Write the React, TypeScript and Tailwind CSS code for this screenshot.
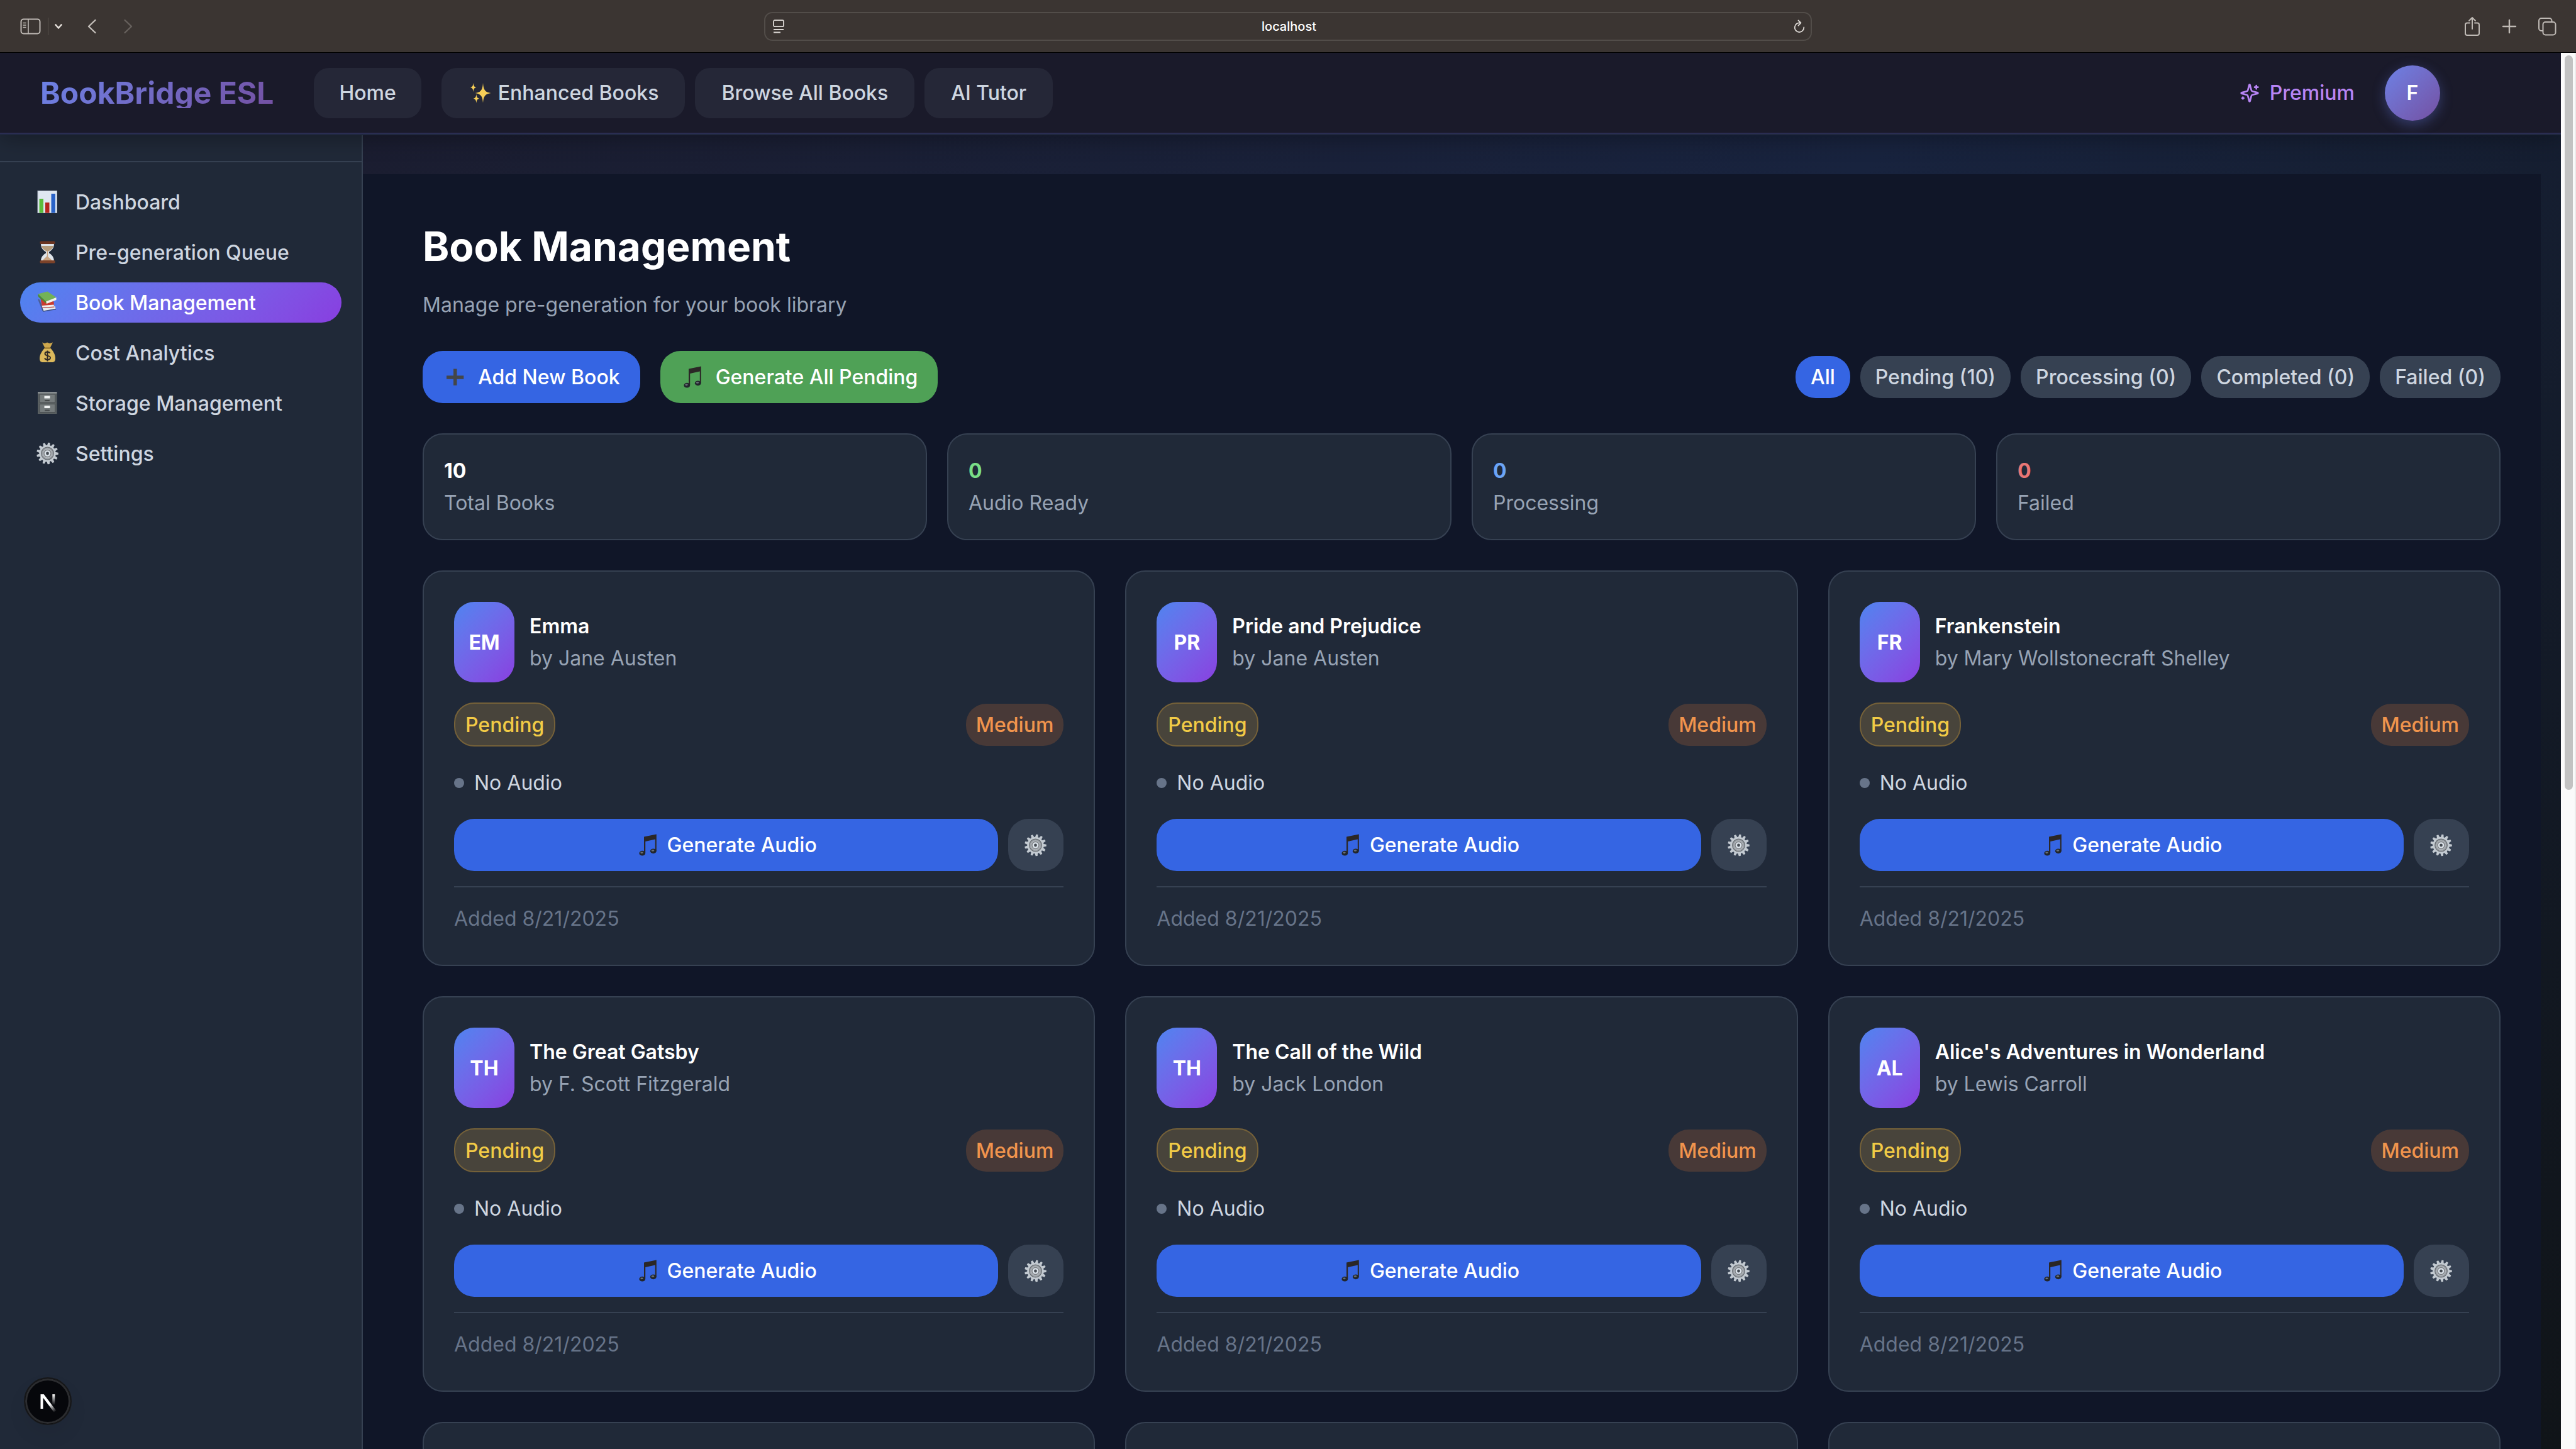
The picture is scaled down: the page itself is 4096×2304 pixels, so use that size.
import React from 'react';

type IconProps = { className?: string };

const Emoji = ({ children }: { children: React.ReactNode }) => (
  <svg viewBox="0 0 40 40" className="size-10 shrink-0" aria-hidden="true">
    {children}
  </svg>
);

const ChartEmoji = () => (
  <Emoji>
    <rect x="4" y="2.5" width="30.5" height="35" fill="#dfe7f1" stroke="#aeb7c4" strokeWidth="1" />
    <rect x="6.5" y="15" width="6.5" height="22.5" fill="#5bbd3c" />
    <rect x="16" y="21" width="6.5" height="16.5" fill="#b5261e" />
    <rect x="25.5" y="7" width="6.5" height="30.5" fill="#2a63c8" />
  </Emoji>
);

const HourglassEmoji = () => (
  <Emoji>
    <path d="M9 6h21c0 6-2 10-8 13.500v2c6 3.500 8 8 8 13.500H9c0-6 2-10 8-13.500v-2C11 16 9 12 9 6z" fill="#dfe4ea" />
    <path d="M10 10h19c-1 4-4 6.500-8 8.500h-3c-4-2-7-4.500-8-8.500z" fill="#b59a7a" />
    <path d="M11.500 34.500c1-4 5-5 7.500-9 2.500 4 7 5 8.500 9z" fill="#c9a583" />
    <path d="M19.500 18v9" stroke="#c9a583" strokeWidth="1.500" />
    <rect x="7.500" y="2.500" width="24" height="4.500" rx="1.500" fill="#6b3420" />
    <rect x="7.500" y="33" width="24" height="4.500" rx="1.500" fill="#7c4229" />
  </Emoji>
);

const BooksEmoji = () => (
  <Emoji>
    <path d="M4 14.500l3 1 6 15.500-1.500 2.500z" fill="#4a5f96" />
    <path d="M11.500 28l20-2.500 1 4.500-20 4z" fill="#e9ebef" />
    <path d="M11 29.500l2 4.500 20-3.500" fill="none" stroke="#3c4f82" strokeWidth="1.500" />
    <path d="M8.500 13.500l21 5 .5 5.500-19.500 1.500z" fill="#c93b30" />
    <path d="M10.500 25l19-1.500.5 2.800-18.500 1.700z" fill="#f1eded" />
    <path d="M11 28.500l19.500-1.500" stroke="#a92a20" strokeWidth="1.200" />
    <path d="M4.500 6.500L19.500 2.500 33.500 12 17 18.500z" fill="#73b257" />
    <path d="M17 18.500l16.500-6.500v4L18 22z" fill="#f2f4ee" />
    <path d="M4.500 6.500c-.5 2 0 4 1.500 5.500l12 10-1-3.500z" fill="#4d8c33" />
  </Emoji>
);

const MoneyEmoji = () => (
  <Emoji>
    <path d="M11 3.500l4 1.500 4-1.500 4 1.500 5-1.500-5 10h-7z" fill="#cfa84d" />
    <path d="M15.500 12h8c5 4.500 8.500 11 8.500 16.500 0 4.500-1.500 6.500-5.500 6.500h-14c-4 0-5.500-2-5.500-6.500C7 23 11 16.500 15.500 12z" fill="#dcb95c" />
    <path d="M14.500 12.500h10" stroke="#93702a" strokeWidth="2" />
    <path d="M23.500 20.500c-1-1.500-2.500-2-4-2-2.500 0-4 1.200-4 3 0 4.200 8.500 2 8.500 6.300 0 2-1.800 3.200-4.500 3.200-2 0-3.700-.8-4.500-2.500M19.500 16.500v17" fill="none" stroke="#2f2a26" strokeWidth="2" />
  </Emoji>
);

const CabinetEmoji = () => (
  <Emoji>
    <rect x="4" y="2.500" width="30.500" height="34.500" fill="#595f61" />
    <rect x="4" y="2.500" width="30.500" height="2" fill="#9a9fa1" />
    <rect x="7" y="6" width="24.500" height="13" fill="#757b7c" stroke="#4a4f50" />
    <rect x="7" y="21.500" width="24.500" height="13" fill="#757b7c" stroke="#4a4f50" />
    <rect x="14.500" y="8.500" width="9" height="4" fill="#f0f2f2" />
    <rect x="14.500" y="24" width="9" height="4" fill="#f0f2f2" />
    <rect x="15" y="15" width="8" height="2" rx="1" fill="#45494a" />
    <rect x="15" y="30.500" width="8" height="2" rx="1" fill="#45494a" />
  </Emoji>
);

const teeth = Array.from({ length: 13 }, (_, i) => (i * 360) / 13 + 8);

const GearEmoji = () => (
  <Emoji>
    {teeth.map((angle) => (
      <path key={angle} d="M17 8l1-5.300h3L22 8z" fill="#c3cad1" transform={`rotate(${angle} 19.500 20)`} />
    ))}
    <circle cx="19.500" cy="20" r="13.200" fill="#c3cad1" />
    <circle cx="19.500" cy="20" r="9.800" fill="#9ba0a6" stroke="#6b7075" strokeWidth="1.300" />
    <circle cx="19.500" cy="20" r="6.800" fill="#7d8185" stroke="#b4b9be" strokeWidth="1.200" />
    <circle cx="19.500" cy="20" r="3.600" fill="#454b52" stroke="#dce3ea" strokeWidth="2.400" />
  </Emoji>
);

const PlusEmoji = () => (
  <Emoji>
    <path d="M17 6.500h5.500v10.700h10.800v5.500H22.500v10H17v-10H6v-5.500h11z" fill="#444648" />
  </Emoji>
);

const NoteEmoji = () => (
  <Emoji>
    <path d="M13 6.600L32.800 2.400V29h-2V10.600l-15.600 3.300V32h-2.200z" fill="#2b2726" />
    <ellipse cx="10.300" cy="32.700" rx="4.900" ry="3.900" fill="#22262b" />
    <ellipse cx="27.800" cy="29.300" rx="4.900" ry="3.900" fill="#22262b" />
    <ellipse cx="9.500" cy="31.800" rx="2.200" ry="1.400" fill="#687078" />
    <ellipse cx="27" cy="28.400" rx="2.200" ry="1.400" fill="#687078" />
  </Emoji>
);

const SparklesEmoji = () => (
  <Emoji>
    <g fill="#f8cf57">
      <path d="M24 4c.9 11 3 14.500 12.500 16C27 21.500 24.900 25 24 35.500 23.100 25 21 21.500 11.500 20 21 18.500 23.100 15 24 4z" />
      <path d="M8.600 3.800c.5 5 1.500 6.500 5 7.200-3.500.7-4.500 2.200-5 7.200-.5-5-1.500-6.500-5-7.200 3.500-.7 4.500-2.200 5-7.200z" />
      <path d="M13.400 21.500c.5 5 1.500 6.500 5 7.200-3.500.7-4.500 2.200-5 7.200-.5-5-1.500-6.500-5-7.200 3.500-.7 4.500-2.200 5-7.200z" />
    </g>
  </Emoji>
);

const PremiumIcon = ({ className }: IconProps) => (
  <svg viewBox="0 0 24 24" fill="none" stroke="currentColor" strokeWidth="2" strokeLinecap="round" strokeLinejoin="round" className={className} aria-hidden="true">
    <path d="M9.937 15.5A2 2 0 0 0 8.500 14.063l-6.135-1.582a.5.5 0 0 1 0-.962L8.500 9.936A2 2 0 0 0 9.937 8.500l1.582-6.135a.5.5 0 0 1 .963 0L14.063 8.500A2 2 0 0 0 15.500 9.937l6.135 1.581a.5.5 0 0 1 0 .964L15.500 14.063a2 2 0 0 0-1.437 1.437l-1.582 6.135a.5.5 0 0 1-.963 0z" />
    <path d="M20 3v4M22 5h-4M4 17v2M5 18H3" />
  </svg>
);

const iconButton = 'flex items-center justify-center text-[#bfbab5]';

function BrowserBar() {
  return (
    <div className="grid h-[83px] shrink-0 grid-cols-[1fr_1666px_1fr] items-center border-b border-black bg-[#3b3532] box-content">
      <div className="flex items-center pl-8">
        <button aria-label="Sidebar" className={iconButton}>
          <svg viewBox="0 0 33 26" className="h-[26px] w-[33px]" fill="none" stroke="currentColor" strokeWidth="2">
            <rect x="1.500" y="1.500" width="30" height="23" rx="4" />
            <path d="M13 1.500v23M4.500 7.500h5M4.500 11h5M4.500 14.500h5" strokeWidth="1.600" />
          </svg>
        </button>
        <span className="ml-[11px] h-7 w-px bg-[#57514d]" />
        <button aria-label="Tab groups" className="ml-[9px] text-[#e4dfda]">
          <svg viewBox="0 0 14 10" className="h-[10px] w-[14px]" fill="none" stroke="currentColor" strokeWidth="2.600" strokeLinecap="round" strokeLinejoin="round">
            <path d="M2.500 2.500L7 7.500l4.500-5" />
          </svg>
        </button>
        <button aria-label="Back" className="ml-[38px] text-[#c4bfba]">
          <svg viewBox="0 0 16 26" className="h-[26px] w-4" fill="none" stroke="currentColor" strokeWidth="2.400" strokeLinecap="round" strokeLinejoin="round">
            <path d="M13.500 3L3 13l10.500 10" />
          </svg>
        </button>
        <button aria-label="Forward" className="ml-[42px] text-[#67615d]">
          <svg viewBox="0 0 16 26" className="h-[26px] w-4" fill="none" stroke="currentColor" strokeWidth="2.400" strokeLinecap="round" strokeLinejoin="round">
            <path d="M2.500 3L13 13 2.500 23" />
          </svg>
        </button>
      </div>
      <div className="flex h-[46px] items-center justify-between rounded-[13px] border-2 border-[#524d49] pr-[9px] pl-3 text-[#dcd8d4]">
        <button aria-label="Reader">
          <svg viewBox="0 0 18 22" className="h-[22px] w-[18px]" fill="none" stroke="currentColor" strokeWidth="1.800">
            <rect x="1" y="1.200" width="16" height="10" rx="2" />
            <path d="M1 16h16M1 20.500h11" />
          </svg>
        </button>
        <span className="text-[20px] leading-6 font-medium text-white">localhost</span>
        <button aria-label="Reload">
          <svg viewBox="0 0 18 22" className="h-[22px] w-[18px]" fill="none" stroke="currentColor" strokeWidth="1.800" strokeLinecap="round" strokeLinejoin="round">
            <path d="M10.500 5.600A7.300 7.300 0 1 0 16.300 12.500M7.500 1.500l4 4-4 4.200" />
          </svg>
        </button>
      </div>
      <div className="flex items-center justify-end pr-[31px]">
        <button aria-label="Share" className={iconButton}>
          <svg viewBox="0 0 26 32" className="h-8 w-[26px]" fill="none" stroke="currentColor" strokeWidth="2" strokeLinecap="round" strokeLinejoin="round">
            <path d="M9 10.500H5a3 3 0 0 0-3 3V27a3 3 0 0 0 3 3h16a3 3 0 0 0 3-3V13.500a3 3 0 0 0-3-3h-4M13 20V2M8 7l5-5 5 5" />
          </svg>
        </button>
        <button aria-label="New tab" className="ml-[34px] text-[#bfbab5]">
          <svg viewBox="0 0 24 24" className="size-6" fill="none" stroke="currentColor" strokeWidth="2.400" strokeLinecap="round">
            <path d="M12 2v20M2 12h20" />
          </svg>
        </button>
        <button aria-label="Tab overview" className="ml-[33px] text-[#bfbab5]">
          <svg viewBox="0 0 30 30" className="size-[30px]" fill="none" stroke="currentColor" strokeWidth="2" strokeLinejoin="round">
            <rect x="8.500" y="8" width="20" height="20.500" rx="4" />
            <path d="M8.500 22H6a4 4 0 0 1-4-4V6a4 4 0 0 1 4-4h12.500a4 4 0 0 1 4 4v2" />
          </svg>
        </button>
      </div>
    </div>
  );
}

const navLink = 'flex h-20 items-center gap-2 rounded-3xl bg-[#252737] font-medium text-[#ced6e0]';

function Header() {
  return (
    <header className="relative z-10 shadow-[0_6px_32px_rgba(0,0,0,0.3)]">
      <div className="flex h-[129px] items-center justify-between border-b-2 border-[#2a2d52] bg-[#1a1a2a] pr-[192px] pl-16">
        <div className="flex items-center">
          <a href="#home" className="bg-linear-135 from-[#6c82e6] to-[#7350a2] bg-clip-text text-5xl leading-none font-bold text-transparent">
            BookBridge ESL
          </a>
          <nav className="ml-16 flex items-center gap-4">
            <a href="#home" className={`${navLink} px-10`}>Home</a>
            <a href="#enhanced" className={`${navLink} ml-4 px-[42px]`}>
              <SparklesEmoji />
              Enhanced Books
            </a>
            <a href="#browse" className={`${navLink} px-[42px]`}>Browse All Books</a>
            <a href="#tutor" className={`${navLink} px-[42px]`}>AI Tutor</a>
          </nav>
        </div>
        <div className="flex items-center gap-12">
          <a href="#premium" className="flex items-center gap-4 font-medium text-[#b885f5]">
            <PremiumIcon className="size-8" />
            Premium
          </a>
          <button className="size-[88px] rounded-full bg-linear-135 from-[#6c82e6] to-[#7350a2] font-semibold text-white shadow-[0_6px_20px_rgba(102,126,234,0.35)]">
            F
          </button>
        </div>
      </div>
      <div className="h-[2px] bg-[#20283f]" />
    </header>
  );
}

const menu = [
  { label: 'Dashboard', Icon: ChartEmoji, active: false },
  { label: 'Pre-generation Queue', Icon: HourglassEmoji, active: false },
  { label: 'Book Management', Icon: BooksEmoji, active: true },
  { label: 'Cost Analytics', Icon: MoneyEmoji, active: false },
  { label: 'Storage Management', Icon: CabinetEmoji, active: false },
  { label: 'Settings', Icon: GearEmoji, active: false },
];

function Sidebar() {
  return (
    <aside className="w-[577px] shrink-0 border-r-2 border-[#364152] bg-[#202938]">
      <div className="h-[43px] border-b-2 border-[#364152]" />
      <nav className="flex flex-col gap-4 px-8 pt-[31px]">
        {menu.map(({ label, Icon, active }) => (
          <a
            key={label}
            href="#section"
            className={`flex h-16 items-center gap-6 rounded-full px-6 font-medium ${
              active ? 'bg-linear-135 from-[#4c84f0] to-[#883ee0] text-white' : 'text-[#ced6e0]'
            }`}
          >
            <Icon />
            {label}
          </a>
        ))}
      </nav>
    </aside>
  );
}

const stats = [
  { value: '10', label: 'Total Books', color: 'text-white' },
  { value: '0', label: 'Audio Ready', color: 'text-[#79dd87]' },
  { value: '0', label: 'Processing', color: 'text-[#6ba4f6]' },
  { value: '0', label: 'Failed', color: 'text-[#e87675]' },
];

const filters = ['All', 'Pending (10)', 'Processing (0)', 'Completed (0)', 'Failed (0)'];

const books = [
  { code: 'EM', title: 'Emma', author: 'Jane Austen' },
  { code: 'PR', title: 'Pride and Prejudice', author: 'Jane Austen' },
  { code: 'FR', title: 'Frankenstein', author: 'Mary Wollstonecraft Shelley' },
  { code: 'TH', title: 'The Great Gatsby', author: 'F. Scott Fitzgerald' },
  { code: 'TH', title: 'The Call of the Wild', author: 'Jack London' },
  { code: 'AL', title: "Alice's Adventures in Wonderland", author: 'Lewis Carroll' },
];

const card = 'rounded-4xl border-2 border-[#364152] bg-[#202938]';

function BookCard({ code, title, author }: (typeof books)[number]) {
  return (
    <article className={`${card} p-12`}>
      <div className="flex items-center gap-6">
        <div className="flex h-32 w-24 items-center justify-center rounded-4xl bg-linear-135 from-[#4c84f0] to-[#883ee0] font-bold text-white">
          {code}
        </div>
        <div>
          <h3 className="font-semibold text-white">{title}</h3>
          <p className="text-[#97a3b4]">by {author}</p>
        </div>
      </div>
      <div className="mt-8 flex items-center justify-between font-medium">
        <span className="flex h-[70px] items-center rounded-4xl border-2 border-[#756139] bg-[#48443b] px-4 text-[#f2cb46]">Pending</span>
        <span className="rounded-4xl bg-[#483937] px-4 py-2 text-[#f0944d]">Medium</span>
      </div>
      <div className="mt-8 flex items-center gap-4 text-[#ced6e0]">
        <span className="size-4 rounded-full bg-[#677489]" />
        No Audio
      </div>
      <div className="mt-8 flex gap-4 font-medium text-white">
        <button className="flex flex-1 items-center justify-center gap-[10px] rounded-4xl bg-[#3565e3] py-4">
          <NoteEmoji />
          Generate Audio
        </button>
        <button aria-label="Settings" className="flex items-center rounded-4xl bg-[#364152] px-6">
          <GearEmoji />
        </button>
      </div>
      <div className="mt-6 border-t-2 border-[#364152] pt-6 text-[#677489]">Added 8/21/2025</div>
    </article>
  );
}

function Main() {
  return (
    <main className="mt-[62px] mr-8 min-w-0 flex-1 bg-[#101628] pt-16 pr-16 pl-[95px]">
      <h1 className="text-[64px] leading-[102px] font-bold text-white">Book Management</h1>
      <p className="mt-4 text-[#97a3b4]">Manage pre-generation for your book library</p>
      <div className="mt-12 flex items-center justify-between font-medium">
        <div className="flex gap-8 text-white">
          <button className="flex items-center gap-4 rounded-4xl bg-[#3565e3] px-8 py-4">
            <PlusEmoji />
            Add New Book
          </button>
          <button className="flex items-center gap-4 rounded-4xl bg-[#4fa156] px-8 py-4">
            <NoteEmoji />
            Generate All Pending
          </button>
        </div>
        <div className="flex gap-4">
          {filters.map((name, i) => (
            <button key={name} className={`rounded-4xl px-6 py-2 ${i === 0 ? 'bg-[#3565e3] text-white' : 'bg-[#364152] text-[#ced6e0]'}`}>
              {name}
            </button>
          ))}
        </div>
      </div>
      <section className="mt-12 grid grid-cols-4 gap-8">
        {stats.map(({ value, label, color }) => (
          <div key={label} className={`${card} p-8`}>
            <div className={`font-bold ${color}`}>{value}</div>
            <div className="text-[#97a3b4]">{label}</div>
          </div>
        ))}
      </section>
      <section className="mt-12 grid grid-cols-3 gap-12">
        {books.map((book) => (
          <BookCard key={book.title} {...book} />
        ))}
        {[0, 1, 2].map((n) => (
          <article key={n} className={`${card} h-[629px]`} />
        ))}
      </section>
    </main>
  );
}

function NextBadge() {
  return (
    <button
      aria-label="Developer tools"
      className="absolute bottom-[38px] left-[38px] z-20 flex size-[76px] items-center justify-center rounded-full border-2 border-[#17181a] bg-[#06070b] shadow-[0_16px_32px_rgba(0,0,0,0.06)] inset-ring-3 inset-ring-[#2b2c2f]"
    >
      <svg viewBox="0 0 76 76" className="size-[76px] shrink-0" aria-hidden="true">
        <defs>
          <linearGradient id="diag" gradientUnits="userSpaceOnUse" x1="41" y1="43" x2="50" y2="55">
            <stop offset="0" stopColor="#fff" />
            <stop offset="1" stopColor="#fff" stopOpacity="0" />
          </linearGradient>
          <linearGradient id="stem" gradientUnits="userSpaceOnUse" x1="0" y1="27" x2="0" y2="44">
            <stop offset="0" stopColor="#fff" />
            <stop offset="1" stopColor="#fff" stopOpacity="0" />
          </linearGradient>
        </defs>
        <path d="M26.500 27h5.200L51.300 53l-3.500 2.500L30.500 32.500V50h-4z" fill="url(#diag)" />
        <rect x="45.300" y="27" width="4" height="17" fill="url(#stem)" />
      </svg>
    </button>
  );
}

export default function App() {
  return (
    <div className="relative flex h-screen flex-col overflow-hidden font-['Inter',sans-serif] text-[32px] leading-[51px]">
      <BrowserBar />
      <div className="flex min-h-0 flex-1">
        <div className="flex min-w-0 flex-1 flex-col overflow-hidden bg-linear-135 from-[#1b1b2c] via-[#18233e] to-[#101418]">
          <Header />
          <div className="flex min-h-0 flex-1">
            <Sidebar />
            <Main />
          </div>
        </div>
        <div className="w-6 shrink-0 border-r-2 border-[#ebebeb] bg-[#fafafa] pt-1 pl-[6px]">
          <div className="h-[1168px] w-[13px] rounded-full bg-[#c2c2c2]" />
        </div>
      </div>
      <NextBadge />
    </div>
  );
}
